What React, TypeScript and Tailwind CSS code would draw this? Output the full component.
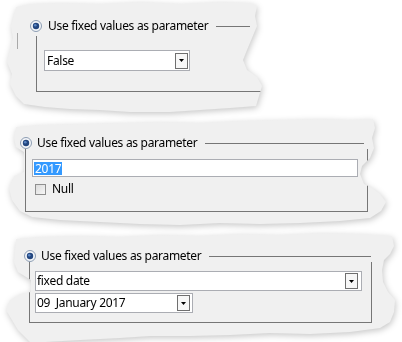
import type { ReactNode } from "react";

const font = "font-['Segoe_UI','Noto_Sans',sans-serif] text-[12px] leading-[14px] tracking-[-0.3px] text-black";

const Radio = ({ className = "" }: { className?: string }) => (
  <svg width="12" height="12" viewBox="0 0 12 12" className={`shrink-0 ${className}`}>
    <circle cx="6" cy="6" r="5.5" fill="#f3f5f8" stroke="#8d9db3" />
    <circle cx="6" cy="6" r="3.2" fill="#23467f" />
    <circle cx="5.3" cy="5.2" r="1.3" fill="#5a86c4" />
  </svg>
);

const DropButton = () => (
  <div className="w-[13px] h-[16px] border border-[#6f6f6f] bg-[#f7f7f7] flex items-center justify-center shrink-0">
    <svg width="5" height="3" viewBox="0 0 5 3">
      <path d="M0 0h5L2.5 3z" fill="#000" />
    </svg>
  </div>
);

const Header = ({ width, gap, children }: { width: string; gap: string; children: ReactNode }) => (
  <div className={`flex items-center h-[12px] ${width}`}>
    <Radio />
    <span className={`${gap} whitespace-nowrap`}>{children}</span>
    <div className="flex-1 ml-[7px] h-px bg-[#767676]" />
  </div>
);

const Panel = ({ height, clip, children }: { height: string; clip: string; children: ReactNode }) => (
  <div className={`${height} [filter:drop-shadow(1px_2px_3px_rgba(0,0,0,0.22))]`}>
    <div className={`h-full bg-[#f0f0f0] ${clip}`}>{children}</div>
  </div>
);

export default function App() {
  return (
    <div className={`w-[402px] h-[342px] bg-white overflow-hidden flex flex-col ${font}`}>
      {/* panel 1 */}
      <Panel
        height="h-[114px]"
        clip="[clip-path:polygon(16px_7px,30px_4px,60px_3px,100px_4px,140px_2px,180px_4px,220px_2px,250px_3px,257px_6px,255px_16px,257px_26px,252px_38px,247px_50px,243px_60px,247px_70px,257px_77px,262px_86px,259px_96px,256px_106px,230px_108px,200px_110px,170px_112px,130px_112px,100px_110px,70px_109px,45px_107px,24px_104px,16px_96px,10px_84px,12px_74px,7px_62px,10px_50px,13px_38px,11px_26px,14px_15px)]"
      >
        <div className="flex pt-[20px]">
          <div className="ml-[17px] mt-[13px] w-px h-[16px] bg-[#a9a9a9]" />
          <div className="ml-[12px]">
            <Header width="w-[220px]" gap="ml-[6px]">
              Use fixed values as parameter
            </Header>
            <div className="ml-[6px] mt-[4px] w-[235px] border-l border-b border-[#767676] pt-[14px] pl-[7px] pb-[20px]">
              <div className="w-[146px] h-[21px] bg-white border border-[#abadb3] flex items-center justify-between pl-[2px] pr-[1px]">
                <span>False</span>
                <DropButton />
              </div>
            </div>
          </div>
        </div>
      </Panel>

      {/* panel 2 */}
      <Panel
        height="h-[116px]"
        clip="[clip-path:polygon(16px_13px,40px_11px,80px_10px,120px_9px,160px_8px,200px_9px,240px_7px,280px_6px,320px_5px,350px_6px,373px_5px,375px_14px,372px_24px,374px_34px,370px_44px,362px_52px,360px_60px,364px_70px,372px_74px,380px_80px,386px_88px,381px_97px,370px_104px,340px_107px,300px_109px,260px_110px,220px_109px,180px_111px,140px_110px,100px_108px,60px_106px,32px_103px,20px_97px,12px_86px,9px_74px,14px_62px,24px_58px,24px_48px,24px_38px,16px_33px,14px_24px)]"
      >
        <div className="pt-[23px] pl-[20px]">
          <Header width="w-[344px]" gap="ml-[5px]">
            Use fixed values as parameter
          </Header>
          <div className="ml-[5px] w-[343px] border-l border-r border-b border-[#767676] pt-[10px] pl-[6px] pb-[15px]">
            <div className="w-[326px] h-[18px] bg-white border border-[#abadb3] flex items-center pl-[1px]">
              <span className="bg-[#3399ff] text-white leading-[13px] px-px">2017</span>
            </div>
            <div className="mt-[5px] flex items-center">
              <div className="ml-[3px] w-[11px] h-[11px] border border-[#8f8f8f] bg-[linear-gradient(135deg,#dcdcdc,#f6f6f6)]" />
              <span className="ml-[6px]">Null</span>
            </div>
          </div>
        </div>
      </Panel>

      {/* panel 3 */}
      <Panel
        height="h-[112px]"
        clip="[clip-path:polygon(16px_9px,40px_7px,80px_6px,120px_7px,160px_5px,200px_6px,240px_4px,280px_5px,320px_3px,360px_4px,392px_6px,394px_16px,390px_24px,384px_30px,382px_40px,383px_52px,388px_62px,395px_70px,394px_82px,390px_92px,380px_98px,350px_102px,310px_104px,270px_103px,230px_105px,190px_106px,150px_106px,120px_108px,80px_110px,45px_112px,30px_112px,18px_100px,12px_90px,6px_80px,10px_70px,20px_64px,31px_62px,31px_50px,18px_42px,14px_32px,15px_20px)]"
      >
        <div className="pt-[20px] pl-[24px]">
          <Header width="w-[347px]" gap="ml-[5px]">
            Use fixed values as parameter
          </Header>
          <div className="ml-[5px] w-[343px] border-l border-r border-b border-[#767676] pt-[9px] pl-[5px] pb-[9px]">
            <div className="w-[327px] h-[20px] bg-white border border-[#abadb3] flex items-center justify-between pl-px pr-[3px]">
              <span>fixed date</span>
              <DropButton />
            </div>
            <div className="mt-[2px] w-[158px] h-[20px] bg-white border border-[#abadb3] flex items-center justify-between pl-px pr-[2px]">
              <span>09&nbsp; January 2017</span>
              <DropButton />
            </div>
          </div>
        </div>
      </Panel>
    </div>
  );
}
